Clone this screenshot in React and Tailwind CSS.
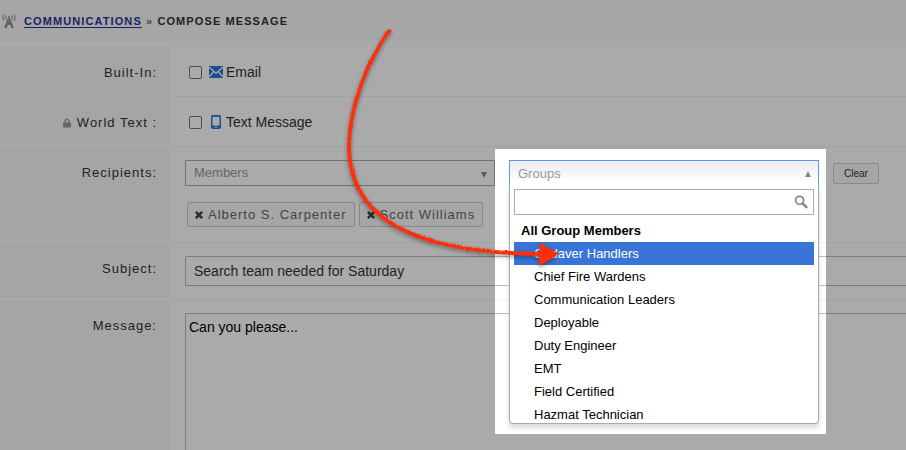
import React from 'react';
import { FaLock } from 'react-icons/fa';

const groups = [
  'Cadaver Handlers',
  'Chief Fire Wardens',
  'Communication Leaders',
  'Deployable',
  'Duty Engineer',
  'EMT',
  'Field Certified',
  'Hazmat Technician'
];

function TowerIcon() {
  return (
    <svg viewBox="0 0 14 14" className="w-3.5 h-3.5" fill="none" stroke="#808080" strokeWidth="1">
      <path d="M2 .5Q-.6 3.6 2 6.7M12 .5Q14.6 3.6 12 6.7M4.4 1.6Q2.7 3.6 4.4 5.6M9.6 1.6Q11.3 3.6 9.6 5.6" />
      <circle cx="7" cy="3.4" r="1.1" fill="#808080" stroke="none" />
      <path d="M6.5 5L3.5 13M7.5 5L10.5 13" strokeWidth="1.6" />
      <path d="M5.6 8.6H8.6L4.6 11.8M5.4 8.8L9.6 11.8M2.4 13.3H5.2M8.8 13.3H11.6" />
    </svg>
  );
}

function EnvelopeIcon() {
  return (
    <svg viewBox="0 0 14 12" className="w-3.5 h-3">
      <rect width="14" height="12" fill="#2874dc" />
      <path d="M0 1.2L7 7.2L14 1.2M0 10.8L4.8 5.6M14 10.8L9.2 5.6" fill="none" stroke="#fff" strokeWidth="1.3" />
    </svg>
  );
}

function PhoneIcon() {
  return (
    <svg viewBox="0 0 10 14" className="w-2.5 h-3.5">
      <rect width="10" height="14" rx="1.8" fill="#2874dc" />
      <rect x="1.5" y="1.8" width="7" height="8.8" fill="#fff" />
      <circle cx="5" cy="12.3" r="0.9" fill="#fff" />
    </svg>
  );
}

function CrossIcon() {
  return (
    <svg viewBox="0 0 8 8" className="w-2 h-2" stroke="#444" strokeWidth="2.6">
      <path d="M.9 .9L7.1 7.1M7.1 .9L.9 7.1" />
    </svg>
  );
}

function SearchIcon() {
  return (
    <svg viewBox="0 0 13 13" className="absolute right-1.5 top-1.5 w-3.5 h-3.5" fill="none" stroke="#888">
      <circle cx="5.2" cy="4.9" r="3.7" strokeWidth="1.6" />
      <path d="M8 7.8L12.2 12" strokeWidth="2.4" />
    </svg>
  );
}

function Row({ label, htmlFor, locked, children }) {
  return (
    <div className="grid grid-cols-[170px_1fr] gap-x-0.5">
      <div className="flex justify-end items-start gap-1.5 mb-0.5 pt-[17px] pr-[13px] bg-[#f8f8f8] text-[#333] leading-[18px] tracking-[1px]">
        {locked && <FaLock className="w-2 h-[18px] text-[#999]" />}
        <label htmlFor={htmlFor}>{label}</label>
      </div>
      <div className="min-w-0 pl-[13px] border-b border-[#f4f4f4]">{children}</div>
    </div>
  );
}

function CheckOption({ id, icon, text }) {
  return (
    <div className="flex items-center h-[18px] mt-4 mb-[15px] pl-1">
      <input id={id} type="checkbox" className="appearance-none w-[13px] h-[13px] border border-[#767676] rounded-xs bg-white" />
      <label htmlFor={id} className="flex items-center ml-1.5 text-sm text-[#333]">
        <span className="flex justify-center w-4 mr-0.5">{icon}</span>
        {text}
      </label>
    </div>
  );
}

function Chip({ name }) {
  return (
    <button type="button" className="flex items-center gap-[5px] h-[25px] px-[7px] border border-[#ccc] rounded-xs bg-[#f9f9f9] text-[#666] tracking-[1px]">
      <CrossIcon />
      {name}
    </button>
  );
}

function GroupPicker() {
  const [query, setQuery] = React.useState('');
  const [active, setActive] = React.useState(groups[0]);
  const shown = groups.filter(group => group.toLowerCase().includes(query.toLowerCase()));

  return (
    <div className="relative z-10 w-[310px]">
      <button
        type="button"
        aria-haspopup="listbox"
        aria-expanded="true"
        className="flex items-center justify-between w-full h-[26px] pl-2 pr-[7px] border border-b-0 border-[#5897fb] bg-linear-to-b from-[#eee] from-20% to-white to-80% bg-origin-border text-[#999]"
      >
        Groups
        <svg viewBox="0 0 6 6" className="w-1.5 h-1.5" fill="#888"><path d="M3 0L6 6H0Z" /></svg>
      </button>
      <div className="absolute top-full inset-x-0 px-1 pt-[3px] bg-white border border-t-0 border-[#aaa] rounded-b shadow-[0_4px_5px_rgba(0,0,0,0.15)]">
        <div className="relative">
          <input
            type="text"
            aria-label="Search groups"
            value={query}
            onChange={event => setQuery(event.target.value)}
            className="block w-full h-[26px] pl-1 pr-6 border border-[#aaa] bg-white outline-none"
          />
          <SearchIcon />
        </div>
        <ul role="listbox" aria-label="Groups" className="h-[208px] pt-1 overflow-hidden text-[13px] leading-[23px] text-black">
          <li role="presentation" className="pl-[7px] font-bold">All Group Members</li>
          {shown.map(group => (
            <li
              key={group}
              role="option"
              aria-selected={group === active}
              onMouseEnter={() => setActive(group)}
              className={group === active ? 'pl-5 bg-[#3875d7] text-white' : 'pl-5'}
            >
              {group}
            </li>
          ))}
        </ul>
      </div>
      {/* spotlight: everything outside of this box is dimmed */}
      <div className="absolute -top-[11px] -left-3.5 -right-[7px] h-[285px] pointer-events-none shadow-[0_0_0_2000px_rgba(0,0,0,0.333)]" />
    </div>
  );
}

function PointerArrow() {
  return (
    <svg width="600" height="300" viewBox="0 0 600 300" className="absolute top-0 left-0 z-20 pointer-events-none drop-shadow-[0_2px_2px_rgba(0,0,0,0.4)]">
      <defs>
        <filter id="crayon" filterUnits="userSpaceOnUse" x="0" y="0" width="600" height="300" colorInterpolationFilters="sRGB">
          <feTurbulence type="fractalNoise" baseFrequency="0.5" numOctaves="2" seed="4" result="noise" />
          <feDisplacementMap in="SourceGraphic" in2="noise" scale="3" xChannelSelector="R" yChannelSelector="G" />
        </filter>
      </defs>
      <g filter="url(#crayon)" fill="none" stroke="#ff2f0a">
        <path d="M389 31C367 62 350 105 349 145C349 225 425 253 541 254" strokeWidth="3.8" strokeLinecap="round" />
        <path d="M540 243L558 254L540 265Z" fill="#ff2f0a" strokeWidth="1" />
      </g>
    </svg>
  );
}

export default function App() {
  const [subject, setSubject] = React.useState('Search team needed for Saturday');
  const [message, setMessage] = React.useState('Can you please...');

  return (
    <div className="relative h-screen overflow-hidden bg-white font-['Liberation_Sans',Arial,sans-serif] text-[13px]">
      <header className="flex items-center gap-2 h-[41px] pl-0.5 bg-[#f9f9f9] border-t border-[#f2f2f2] text-[11px]">
        <TowerIcon />
        <nav className="font-bold uppercase tracking-widest text-[#333]">
          <a href="#communications" className="text-[#2a3599] underline underline-offset-2">Communications</a>
          <span className="text-[#666]"> » </span>
          Compose Message
        </nav>
      </header>

      <form className="mt-1.5" onSubmit={event => event.preventDefault()}>
        <Row label="Built-In:" htmlFor="email">
          <CheckOption id="email" icon={<EnvelopeIcon />} text="Email" />
        </Row>
        <Row label="World Text :" htmlFor="textMessage" locked>
          <CheckOption id="textMessage" icon={<PhoneIcon />} text="Text Message" />
        </Row>
        <Row label="Recipients:" htmlFor="members">
          <div className="flex items-center gap-3.5 pt-[13px]">
            <div className="relative w-[310px]">
              <select id="members" className="appearance-none block w-full h-[26px] pl-2 border border-[#aaa] bg-white text-[#999]">
                <option>Members</option>
              </select>
              <svg viewBox="0 0 6 6" className="absolute right-2 top-3 w-1.5 h-1.5" fill="#888"><path d="M0 0H6L3 6Z" /></svg>
            </div>
            <GroupPicker />
            <button type="button" className="h-[21px] px-2.5 border border-[#ccc] rounded-xs bg-[#f9f9f9] text-[10px] text-[#333]">
              Clear
            </button>
          </div>
          <div className="flex gap-1 pt-4 pl-0.5 pb-[15px]">
            <Chip name="Alberto S. Carpenter" />
            <Chip name="Scott Williams" />
          </div>
        </Row>
        <Row label="Subject:" htmlFor="subject">
          <input
            id="subject"
            type="text"
            value={subject}
            onChange={event => setSubject(event.target.value)}
            className="block w-full h-[30px] mt-[13px] mb-[13px] pl-2 border border-r-0 border-[#bbb] rounded-l-xs text-sm text-[#333] outline-none"
          />
        </Row>
        <Row label="Message:" htmlFor="message">
          <textarea
            id="message"
            value={message}
            onChange={event => setMessage(event.target.value)}
            className="block w-full h-48 mt-[13px] px-[3px] py-[3px] border border-r-0 border-[#bbb] rounded-l-xs text-sm text-black outline-none resize-none"
          />
        </Row>
      </form>

      <PointerArrow />
    </div>
  );
}
